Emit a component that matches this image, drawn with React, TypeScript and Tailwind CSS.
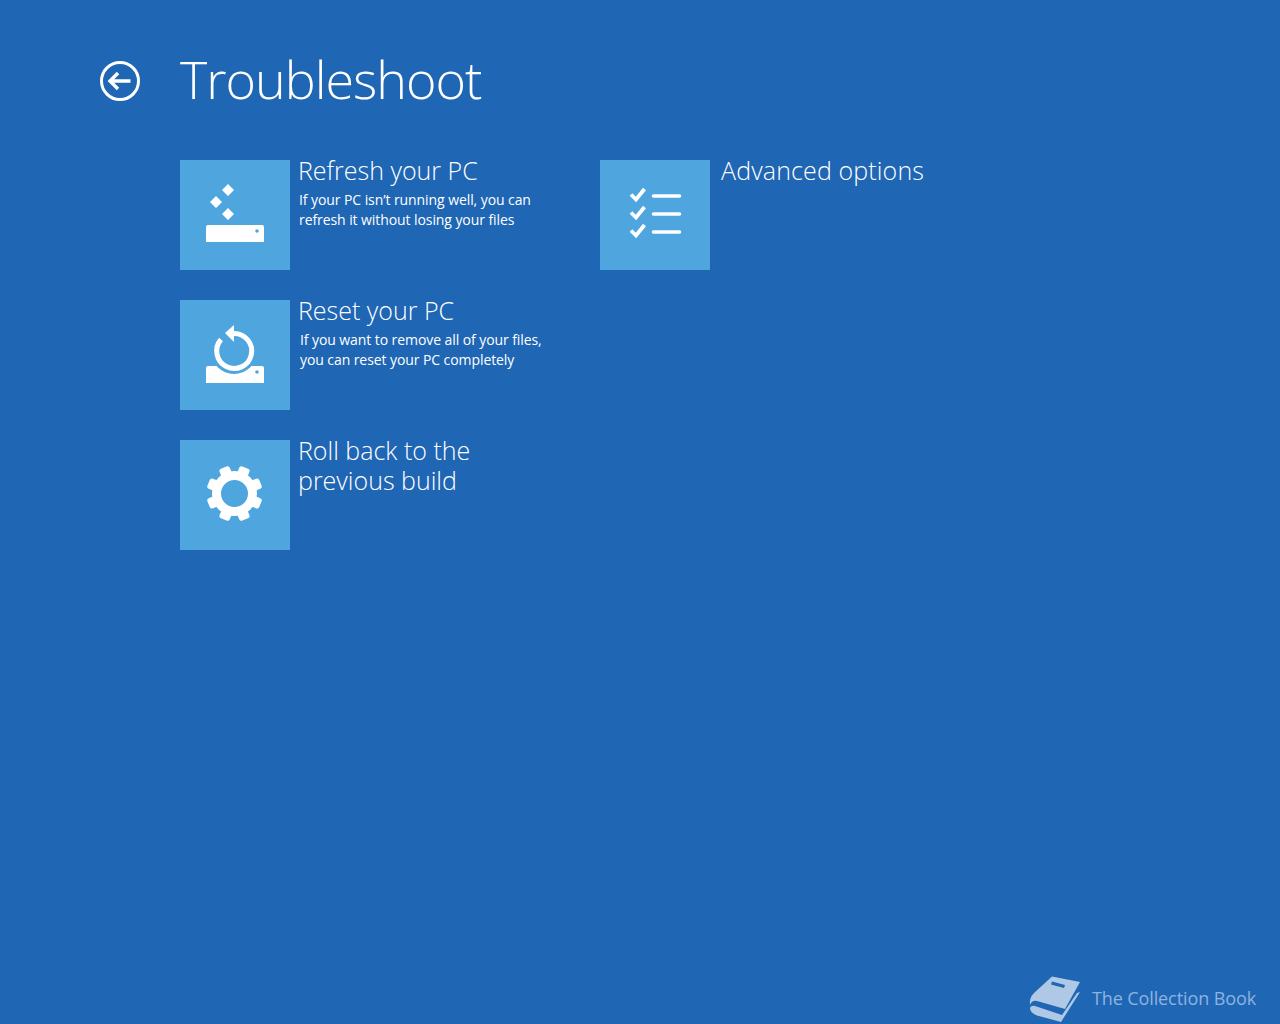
const Tile = ({ children }: { children: React.ReactNode }) => (
  <div className="h-[110px] w-[110px] shrink-0 bg-[#4fa6df]">
    <svg viewBox="0 0 110 110" className="h-[110px] w-[110px]">
      {children}
    </svg>
  </div>
);

const Drive = ({ y }: { y: number }) => (
  <>
    <path d={`M28 ${y}H82a2 2 0 0 1 2 2V${y + 17}H26V${y + 2}a2 2 0 0 1 2-2Z`} fill="#fff" />
    <circle cx="77" cy={y + 6} r="1.8" fill="#4fa6df" />
  </>
);

const gearTeeth = [22.5, 67.5, 112.5, 157.5, 202.5, 247.5, 292.5, 337.5];

export default function App() {
  return (
    <div className="flex h-[1024px] flex-col overflow-hidden bg-[#1f66b4] font-['Open_Sans',sans-serif] text-white">
      <header className="flex items-center pl-[100px] pt-[47px]">
        <svg viewBox="0 0 40 40" className="h-10 w-10" fill="none" stroke="#fff">
          <circle cx="20" cy="20" r="18.5" strokeWidth="3" />
          <path d="M30.500 20H10M18 12l-8 8 8 8" strokeWidth="3.400" />
        </svg>
        <h1 className="ml-10 mt-[-3px] text-[52px] font-light leading-[70px] tracking-[-1px]">Troubleshoot</h1>
      </header>

      <main className="ml-[180px] mt-[46px] grid w-[840px] grid-cols-2">
        <div className="flex flex-col gap-[30px]">
          <div className="flex">
            <Tile>
              <path d="M48 24 54 30 48 36 42 30ZM36 36 42 42 36 48 30 42ZM48 48 54 54 48 60 42 54Z" fill="#fff" />
              <Drive y={65} />
            </Tile>
            <div className="ml-2">
              <h2 className="mt-[-5px] text-[25px] font-light leading-[30px]">Refresh your PC</h2>
              <p className="ml-px mt-[5px] text-[14px] leading-5 tracking-[-0.08px]">
                If your PC isn’t running well, you can
                <br />
                refresh it without losing your files
              </p>
            </div>
          </div>

          <div className="flex">
            <Tile>
              <Drive y={66} />
              <circle cx="54" cy="51" r="23" fill="#4fa6df" />
              <path d="M54 33.500A17.500 17.500 0 1 1 41 39.500" fill="none" stroke="#fff" strokeWidth="5" />
              <path d="M45 33 54 25V42Z" fill="#fff" />
            </Tile>
            <div className="ml-2">
              <h2 className="mt-[-5px] text-[25px] font-light leading-[30px]">Reset your PC</h2>
              <p className="mt-[5px] pl-0.5 text-[14px] leading-5 tracking-[-0.08px]">
                If you want to remove all of your files,
                <br />
                you can reset your PC completely
              </p>
            </div>
          </div>

          <div className="flex">
            <Tile>
              <circle cx="54.500" cy="53.500" r="18" fill="none" stroke="#fff" strokeWidth="9" />
              {gearTeeth.map((a) => (
                <rect key={a} x="49" y="25.500" width="11" height="13" rx="2.500" fill="#fff" transform={`rotate(${a} 54.500 53.500)`} />
              ))}
            </Tile>
            <div className="ml-2">
              <h2 className="mt-[-5px] text-[25px] font-light leading-[30px]">
                Roll back to the
                <br />
                previous build
              </h2>
            </div>
          </div>
        </div>

        <div>
          <div className="flex">
            <Tile>
              <path d="M31 34.500 36 39.500 44.500 29M31 52.500 36 57.500 44.500 47M31 70.500 36 75.500 44.500 65" fill="none" stroke="#fff" strokeWidth="3.800" />
              <path d="M53.500 36H79.500M53.500 54H79.500M53.500 72H79.500" fill="none" stroke="#fff" strokeWidth="3.600" strokeLinecap="round" />
            </Tile>
            <div className="ml-[11px]">
              <h2 className="mt-[-5px] text-[25px] font-light leading-[30px] tracking-[0.13px]">Advanced options</h2>
            </div>
          </div>
        </div>
      </main>

      <footer className="mt-auto flex items-center justify-end pb-px pr-6">
        <svg viewBox="9 11 53 48" className="mr-[10px] h-12 w-[53px]" fill="#aec8e6">
          <path d="M32 12.500 60 18 45 45 17 37Q12 36 10 41 9 34 14 29ZM31 20.500 44 24 45 21 32 17.500Z" fillRule="evenodd" />
          <path d="M10 44Q11 41 15 42L42 51 57 29 60 28 41 58 17 51.500Q10 49 10 44Z" />
        </svg>
        <span className="mb-[2px] text-[18px] tracking-[-0.1px] text-[#8db3e0]">The Collection Book</span>
      </footer>
    </div>
  );
}
